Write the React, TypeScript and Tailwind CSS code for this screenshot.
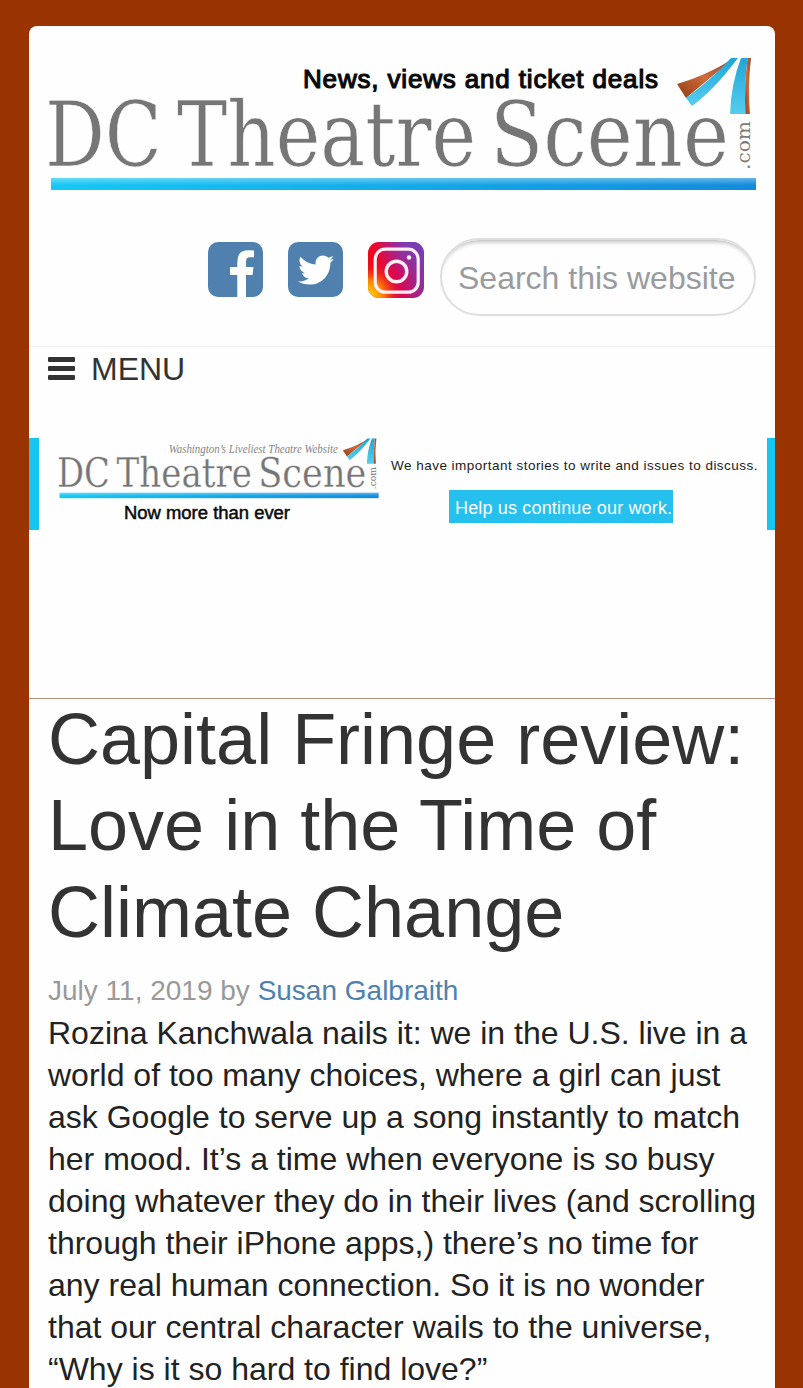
import { FaTwitter } from 'react-icons/fa'

const titleLines = ['Capital Fringe review:', 'Love in the Time of', 'Climate Change']

const paragraphLines = [
  'Rozina Kanchwala nails it: we in the U.S. live in a',
  'world of too many choices, where a girl can just',
  'ask Google to serve up a song instantly to match',
  'her mood. It’s a time when everyone is so busy',
  'doing whatever they do in their lives (and scrolling',
  'through their iPhone apps,) there’s no time for',
  'any real human connection. So it is no wonder',
  'that our central character wails to the universe,',
  '“Why is it so hard to find love?”',
]

type WordmarkProps = {
  id: string
  tagline: string
  script?: boolean
  viewBox: string
  className: string
}

function Wordmark({ id, tagline, script, viewBox, className }: WordmarkProps) {
  return (
    <svg viewBox={viewBox} className={className} role="img" aria-label="DC Theatre Scene">
      <defs>
        <linearGradient id={`${id}-bar`} x1="0" y1="0" x2="1" y2="0">
          <stop offset="0" stopColor="#15c8f5" />
          <stop offset="1" stopColor="#128bdc" />
        </linearGradient>
        <linearGradient id={`${id}-shine`} x1="0" y1="0" x2="0" y2="1">
          <stop offset="0" stopColor="#fff" stopOpacity="0.35" />
          <stop offset="0.6" stopColor="#fff" stopOpacity="0" />
        </linearGradient>
        <linearGradient id={`${id}-rust`} x1="0" y1="1" x2="1" y2="0">
          <stop offset="0" stopColor="#8f3d14" />
          <stop offset="0.5" stopColor="#cf6a3a" />
          <stop offset="1" stopColor="#8a4a30" />
        </linearGradient>
        <linearGradient id={`${id}-sky`} x1="0" y1="1" x2="0" y2="0">
          <stop offset="0" stopColor="#55cdf0" />
          <stop offset="1" stopColor="#1fa6d6" />
        </linearGradient>
      </defs>

      {script ? (
        <text x="292" y="90" fontSize="29" fontStyle="italic" fill="#858585" fontFamily="'Liberation Serif', serif" textLength="374" lengthAdjust="spacingAndGlyphs">
          {tagline}
        </text>
      ) : (
        <text x="303" y="87.5" fontSize="26" fill="#0a0a0a" stroke="#0a0a0a" strokeWidth="1.2" fontFamily="'Liberation Sans', sans-serif" textLength="355" lengthAdjust="spacing">
          {tagline}
        </text>
      )}

      <g fontFamily="'DejaVu Serif', serif" fontSize="89.5" fill="#767676" stroke="#fefefe" strokeWidth="0.6">
        <text x="45" y="166" textLength="117" lengthAdjust="spacingAndGlyphs">DC</text>
        <text x="177" y="166" textLength="299" lengthAdjust="spacingAndGlyphs">Theatre</text>
        <text x="490" y="166" textLength="239" lengthAdjust="spacingAndGlyphs">Scene</text>
      </g>
      <text transform="translate(750 170) rotate(-90)" fontFamily="'DejaVu Serif', serif" fontSize="19" fill="#7b7b7b" textLength="49" lengthAdjust="spacingAndGlyphs">
        .com
      </text>

      <path d="M677 84 Q708 75 734 58 L686 98 Z" fill={`url(#${id}-rust)`} />
      <path d="M686 98 Q712 79 731 58 L738 58 Q714 90 692 106 Z" fill={`url(#${id}-sky)`} />
      <path d="M741 58 L747.5 58 Q744 88 745.5 114 L730 114 Q731 84 741 58 Z" fill={`url(#${id}-sky)`} />
      <path d="M747.5 58 L751 58 Q747.500 86 750 114 L745.5 114 Q744 88 747.5 58 Z" fill={`url(#${id}-rust)`} />

      <rect x="51" y="178" width="705" height="12" fill={`url(#${id}-bar)`} />
      <rect x="51" y="178" width="705" height="12" fill={`url(#${id}-shine)`} />
    </svg>
  )
}

function FacebookIcon() {
  return (
    <svg viewBox="0 0 55 55" className="size-[55px]">
      <rect width="55" height="55" rx="10" fill="#4f80ae" />
      <path d="M29.300 55V33H22V25H29.300V20Q29.300 8.500 39.500 8.300Q43 8 46 8.500V15.300H42Q38 15.300 38 19.500V25H45.500L44.500 33H38V55Z" fill="#fff" />
    </svg>
  )
}

function InstagramIcon() {
  return (
    <svg viewBox="0 0 56 56" className="size-14">
      <defs>
        <linearGradient id="ig-base" x1="0" y1="0.5" x2="1" y2="0.25">
          <stop offset="0.1" stopColor="#f0091c" />
          <stop offset="0.5" stopColor="#d40a5c" />
          <stop offset="0.95" stopColor="#7a3aad" />
        </linearGradient>
        <radialGradient id="ig-glow" cx="0" cy="0.95" r="0.6">
          <stop offset="0" stopColor="#ffe100" />
          <stop offset="0.45" stopColor="#ff9500" stopOpacity="0.85" />
          <stop offset="1" stopColor="#f0091c" stopOpacity="0" />
        </radialGradient>
        <radialGradient id="ig-top" cx="0.75" cy="0" r="0.6">
          <stop offset="0" stopColor="#7a3db5" />
          <stop offset="1" stopColor="#7a3db5" stopOpacity="0" />
        </radialGradient>
      </defs>
      <rect width="56" height="56" rx="11" fill="url(#ig-base)" />
      <rect width="56" height="56" rx="11" fill="url(#ig-top)" />
      <rect width="56" height="56" rx="11" fill="url(#ig-glow)" />
      <rect x="7.200" y="7.200" width="43" height="43" rx="10" fill="none" stroke="#ffeef2" strokeWidth="3.200" />
      <circle cx="28.500" cy="29.500" r="10.300" fill="none" stroke="#ffeef2" strokeWidth="3.400" />
      <circle cx="41" cy="15.500" r="2.200" fill="#ffeef2" />
    </svg>
  )
}

function Header() {
  return (
    <header className="px-[19px] pt-7">
      <Wordmark
        id="main"
        tagline="News, views and ticket deals"
        viewBox="48 54 708 140"
        className="h-[140px] w-[708px]"
      />
      <div className="mt-11 flex items-start justify-end">
        <div className="mt-1 mr-4 flex gap-[25px]">
          <a href="#" aria-label="Facebook">
            <FacebookIcon />
          </a>
          <a
            href="#"
            aria-label="Twitter"
            className="flex size-[55px] items-center justify-center rounded-[10px] bg-[#4f80ae] text-white"
          >
            <FaTwitter size={36} />
          </a>
          <a href="#" aria-label="Instagram">
            <InstagramIcon />
          </a>
        </div>
        <input
          type="text"
          placeholder="Search this website"
          className="h-[78px] w-[316px] rounded-full border-2 border-[#dedede] pt-0.5 pl-4 text-[32px] shadow-[inset_0_6px_4px_-4px_#bdbdbd] outline-none placeholder:text-[#999b9e]"
        />
      </div>
    </header>
  )
}

function Banner() {
  return (
    <a
      href="#"
      className="flex h-[92px] border-r-8 border-l-10 border-[#15c5f2]"
    >
      <div className="ml-[17px] w-[326px]">
        <Wordmark
          id="banner"
          tagline="Washington’s Liveliest Theatre Website"
          script
          viewBox="43 57 720.442 137"
          className="h-[62px] w-[326px]"
        />
        <svg viewBox="0 0 326 28" className="h-7 w-[326px]">
          <text x="68" y="18.500" fontSize="18" fill="#0a0a0a" stroke="#0a0a0a" strokeWidth="0.5" fontFamily="'Liberation Sans', sans-serif" textLength="166" lengthAdjust="spacingAndGlyphs">
            Now more than ever
          </text>
        </svg>
      </div>
      <div className="ml-[9px] flex flex-col items-start">
        <span className="mt-[18px] text-[13.500px] leading-5 whitespace-nowrap text-[#1c1c1c] tracking-[0.48px]">
          We have important stories to write and issues to discuss.
        </span>
        <span className="mt-[14px] ml-[58px] h-[33px] w-[224px] bg-[#26c0ee] pl-1.5 text-[18px] leading-[37px] tracking-[0.16px] whitespace-nowrap text-white">
          Help us continue our work.
        </span>
      </div>
    </a>
  )
}

export default function App() {
  return (
    <div className="h-[1388px] overflow-hidden bg-[#993300] pt-[26px] pr-7 pl-[29px] font-['Liberation_Sans',Arial,sans-serif]">
      <div className="h-full rounded-t-lg bg-[#fefefe]">
        <Header />

        <nav className="mt-[30px] border-t border-[#f4f4f4] px-[19px]">
          <button className="flex h-[43px] items-center gap-4 text-[32px] text-[#333]">
            <span className="flex flex-col gap-1">
              <span className="h-[5px] w-[27px] rounded-[1px] bg-[#333]" />
              <span className="h-[5px] w-[27px] rounded-[1px] bg-[#333]" />
              <span className="h-[5px] w-[27px] rounded-[1px] bg-[#333]" />
            </span>
            MENU
          </button>
        </nav>

        <div className="mt-12">
          <Banner />
        </div>

        <article className="mt-[168px] border-t border-[#b98f80] px-[19px]">
          <h1 className="-mt-[3px] text-[72px] leading-[86.400px] whitespace-nowrap text-[#333]">
            {titleLines.map((line) => (
              <span key={line} className="block">
                {line}
              </span>
            ))}
          </h1>
          <p className="mt-[15px] text-[28px] leading-[42px] text-[#999]">
            July 11, 2019 by{' '}
            <a href="#" className="text-[#4f80ae]">
              Susan Galbraith
            </a>
          </p>
          <p className="text-[32px] leading-[42px] whitespace-nowrap text-[#222]">
            {paragraphLines.map((line) => (
              <span key={line} className="block">
                {line}
              </span>
            ))}
          </p>
        </article>
      </div>
    </div>
  )
}
